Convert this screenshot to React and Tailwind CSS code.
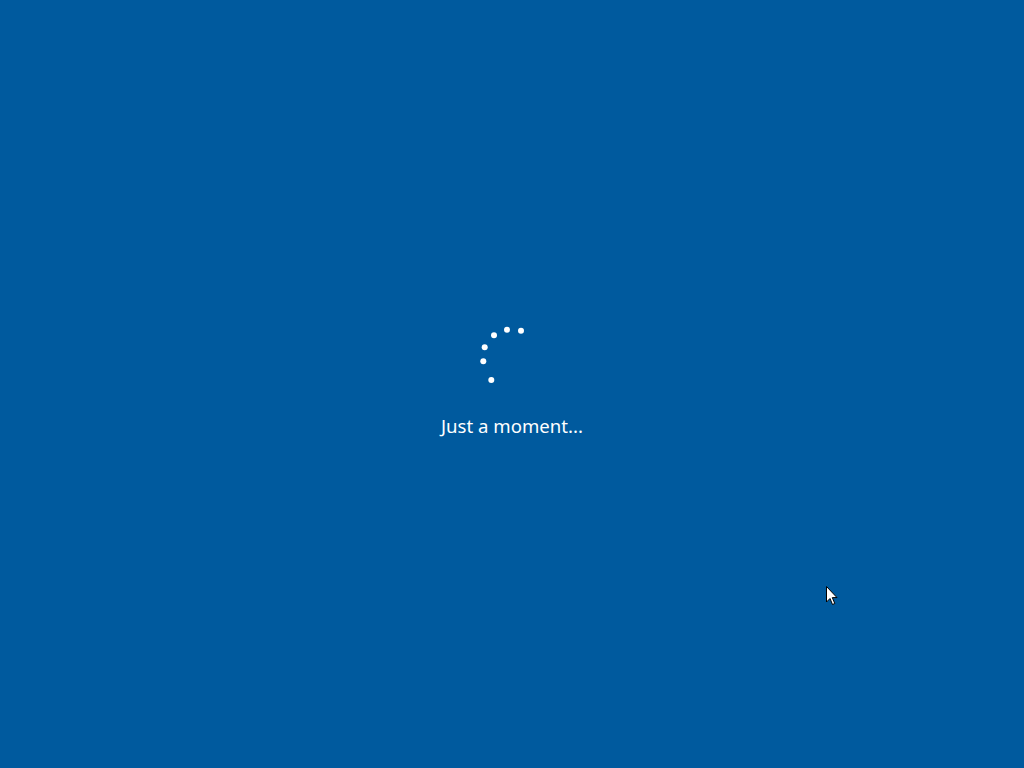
export default function App() {
  const dots = [
    [41, 5.7],
    [27, 4.7],
    [14, 10.3],
    [4.7, 22.3],
    [3.3, 36.3],
    [11.3, 55],
  ];
  return (
    <div className="relative w-full h-[768px] bg-[#005a9e] flex flex-col items-center pt-[325px] overflow-hidden">
      <svg width="64" height="64" viewBox="0 0 64 64" className="block">
        {dots.map(([x, y], i) => (
          <circle key={i} cx={x} cy={y} r="3" fill="#ffffff" />
        ))}
      </svg>
      <div
        className="mt-[25px] text-white text-[18.6px] leading-[24px]"
        style={{ fontFamily: '"Noto Sans", "Open Sans", sans-serif' }}
      >
        Just a moment...
      </div>
      <svg
        width="14"
        height="22"
        viewBox="0 0 14 22"
        className="absolute left-[826px] top-[586px]"
      >
        <path
          d="M0.5 0.5 L0.5 16 L4 12.5 L6.5 18.5 L8.8 17.5 L6.3 11.6 L11 11.6 Z"
          fill="#ffffff"
          stroke="#000000"
          strokeWidth="1"
          strokeLinejoin="miter"
        />
      </svg>
    </div>
  );
}
